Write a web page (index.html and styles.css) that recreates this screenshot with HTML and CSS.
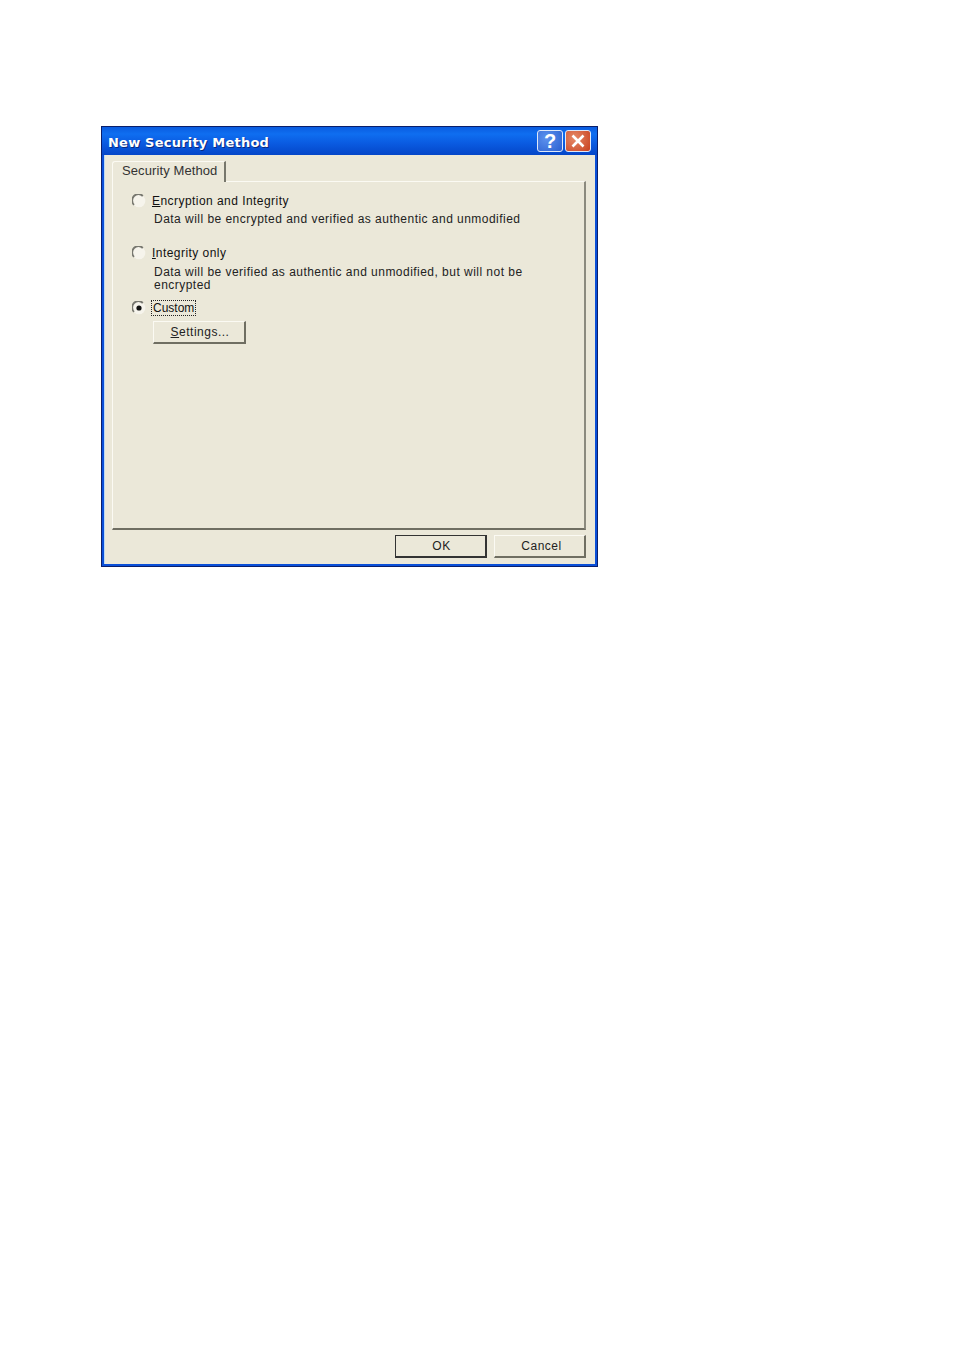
FILE: index.html
```html
<!DOCTYPE html>
<html lang="en">
<head>
<meta charset="utf-8">
<title>New Security Method</title>
<link rel="stylesheet" href="styles.css">
</head>
<body>
<div class="window">
  <div class="titlebar">
    <span class="title">New Security Method</span>
    <div class="controls">
      <div class="ctl help">?</div>
      <div class="ctl close">
        <svg width="16" height="16" viewBox="0 0 16 16"><path d="M2.5 2.5L13.5 13.5M13.5 2.5L2.5 13.5" stroke="#fff" stroke-width="2.6" fill="none"/></svg>
      </div>
    </div>
  </div>
  <div class="client">
    <div class="tabs"><div class="tab">Security Method</div></div>
    <div class="panel">
      <div class="option first">
        <svg class="radio" width="14" height="14" viewBox="0 0 14 14"><circle cx="7" cy="7" r="6.3" fill="#f6f4ec"/><path d="M2 10.8A6.2 6.2 0 0 1 10.8 2" stroke="#77776f" stroke-width="1.8" fill="none"/></svg>
        <div class="label"><u>E</u>ncryption and Integrity</div>
      </div>
      <p class="desc d1">Data will be encrypted and verified as authentic and unmodified</p>
      <div class="option second">
        <svg class="radio" width="14" height="14" viewBox="0 0 14 14"><circle cx="7" cy="7" r="6.3" fill="#f6f4ec"/><path d="M2 10.8A6.2 6.2 0 0 1 10.8 2" stroke="#77776f" stroke-width="1.8" fill="none"/></svg>
        <div class="label"><u>I</u>ntegrity only</div>
      </div>
      <p class="desc d2">Data will be verified as authentic and unmodified, but will not be encrypted</p>
      <div class="option third">
        <svg class="radio" width="14" height="14" viewBox="0 0 14 14"><circle cx="7" cy="7" r="6.3" fill="#f6f4ec"/><path d="M2 10.8A6.2 6.2 0 0 1 10.8 2" stroke="#77776f" stroke-width="1.8" fill="none"/><circle cx="7" cy="7" r="2.6" fill="#111"/></svg>
        <div class="label focus">Custom</div>
      </div>
      <button class="btn settings" type="button"><u>S</u>ettings...</button>
    </div>
    <div class="footer">
      <button class="btn ok" type="button">OK</button>
      <button class="btn cancel" type="button">Cancel</button>
    </div>
  </div>
</div>
</body>
</html>
```
FILE: styles.css
```css
* { box-sizing: border-box; }
html, body { margin: 0; background: #fff; }
body { padding: 126px 0 0 101px; height: 1351px; overflow: hidden; font-family: "Liberation Sans", Arial, sans-serif; font-size: 12px; color: #222; }
.window { width: 497px; height: 441px; border: 1px solid #0a1f6b; display: flex; flex-direction: column; background: #0a4fd8; }
.titlebar { height: 28px; flex: none; display: flex; align-items: center; justify-content: space-between; padding: 0 6px 0 6px; background: linear-gradient(#0a5ce0 0%, #0f6ef0 25%, #0a5ae0 60%, #0446c8 100%); }
.title { font-family: "DejaVu Sans", sans-serif; font-weight: bold; font-size: 13px; letter-spacing: 0.22px; position: relative; top: 1px; color: #fff; text-shadow: 1px 1px 0 #0a2a80; }
.controls { display: flex; gap: 2px; }
.ctl { width: 26px; height: 22px; border: 1px solid #dfe8f8; border-radius: 3px; display: flex; align-items: center; justify-content: center; color: #fff; }
.help { background: radial-gradient(circle at 35% 35%, #5d92ee, #2a5fd0); font: bold 20px "Liberation Sans", sans-serif; }
.close { background: radial-gradient(circle at 35% 35%, #e58a68, #c8401f); }
.client { flex: 1; margin: 0 2px 2px 2px; padding: 6px 9px 0 7px; background: #ebe8d9; display: flex; flex-direction: column; border-left: 1px solid #b9d8f4; }
.tabs { display: flex; height: 21px; flex: none; margin-bottom: -1px; position: relative; z-index: 1; }
.tab { width: 114px; height: 21px; background: #ebe8d9; border-top: 1px solid #fbfaf3; border-left: 1px solid #fbfaf3; border-right: 2px solid #77776c; border-top-left-radius: 3px; padding: 1px 0 0 9px; font-size: 13px; letter-spacing: 0.1px; color: #333; }
.panel { width: 474px; height: 349px; flex: none; border: 1px solid #fbfaf3; border-right: 2px solid #8b8a7e; border-bottom: 2px solid #6f6e62; background: #ebe8d9; padding-left: 18px; }
.option { display: flex; align-items: center; gap: 6px; height: 16px; }
.first { margin-top: 11px; }
.second { margin-top: 19px; }
.third { margin-top: 8px; }
.radio { flex: none; margin: 0 0 0 1px; }
.label { font-size: 12px; letter-spacing: 0.45px; line-height: 14px; color: #111; }
.focus { outline: 1px dotted #222; outline-offset: 0; letter-spacing: 0; padding: 0 1px; }
.desc { margin: 0 0 0 23px; width: 375px; font-size: 12px; line-height: 13px; letter-spacing: 0.47px; color: #222; }
.d1 { margin-top: 4px; }
.d2 { margin-top: 5px; }
.btn { display: block; width: 92px; height: 23px; padding: 0 0 0 2px; background: #ebe8d9; font: 12px "Liberation Sans", sans-serif; letter-spacing: 0.5px; color: #222; border: 1px solid #fbfaf3; border-right: 2px solid #6f6e62; border-bottom: 2px solid #6f6e62; }
.settings { margin: 5px 0 0 22px; height: 23px; width: 93px; }
.footer { display: flex; justify-content: flex-end; gap: 7px; margin-top: 5px; }
.ok { width: 92px; border: 1px solid #333; border-right: 2px solid #333; border-bottom: 2px solid #333; }
.cancel { padding-left: 4px; }
```
